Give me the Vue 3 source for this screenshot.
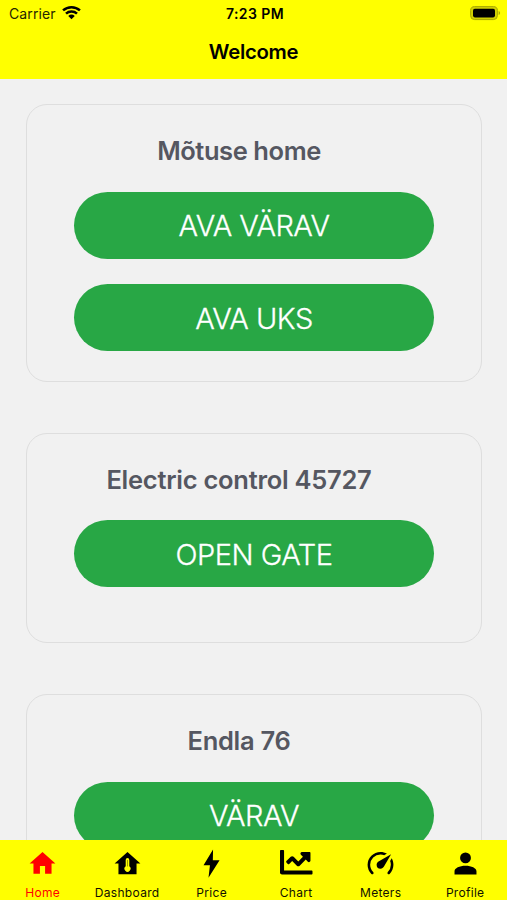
<script setup>
const cards = [
  { title: 'Mõtuse home', buttons: ['AVA VÄRAV', 'AVA UKS'], size: 'tall', tone: 'a' },
  { title: 'Electric control 45727', buttons: ['OPEN GATE'], size: 'short', tone: 'b' },
  { title: 'Endla 76', buttons: ['VÄRAV'], size: 'short', tone: 'c' },
]
const tabs = ['Home', 'Dashboard', 'Price', 'Chart', 'Meters', 'Profile']
</script>

<template>
  <div class="screen">
    <header class="header">
      <div class="status">
        <div class="carrier">
          <span>Carrier</span>
          <svg class="wifi" viewBox="0 0 18 14">
            <path d="M1 5.100C5.500 1 12.500 1 17 5.100" />
            <path d="M3.800 8.200c2.900-2.700 7.500-2.700 10.400 0" />
            <path class="solid" d="M5.900 10.300c1.800-1.600 4.400-1.600 6.200 0L9 13.500z" />
          </svg>
        </div>
        <span class="time">7:23 PM</span>
        <svg class="battery" viewBox="0 0 31 15">
          <rect class="shell" x=".6" y=".6" width="26.8" height="13" rx="4" />
          <rect x="3" y="2.8" width="22" height="8.6" rx="1.8" />
          <path class="nub" d="M28.6 5.100c2 .7 2 3.300 0 4z" />
        </svg>
      </div>
      <h1>Welcome</h1>
    </header>
    <main class="content">
      <section v-for="card in cards" :key="card.title" class="card" :class="card.size">
        <h2 :class="'title-' + card.tone">{{ card.title }}</h2>
        <button v-for="label in card.buttons" :key="label">{{ label }}</button>
      </section>
    </main>
    <nav class="tabs">
      <a v-for="(tab, i) in tabs" :key="tab" class="tab" :class="{ active: i === 0 }">
        <span class="icon">
          <svg v-if="tab === 'Home'" viewBox="0 0 24 24"><path d="M10 20v-6h4v6h5v-8h3L12 3 2 12h3v8z" /></svg>
          <svg v-else-if="tab === 'Dashboard'" viewBox="0 0 24 24">
            <path fill-rule="evenodd" d="M12 3 2 12h3v8.300h14V12h3zM12 7.800a1.400 1.400 0 0 1 1.400 1.400v5a2.300 2.300 0 1 1-2.800 0v-5A1.400 1.400 0 0 1 12 7.800z" />
            <path class="mercury" d="M12 9.300v5" />
          </svg>
          <svg v-else-if="tab === 'Price'" viewBox="0 0 30 30"><path d="M16.500 1.500 7.300 16.800h6.200l-1.400 12L22.800 11.900h-6.500z" /></svg>
          <svg v-else-if="tab === 'Chart'" class="chart" viewBox="0 0 512 512">
            <path d="M496 384H64V80c0-8.840-7.160-16-16-16H16C7.160 64 0 71.160 0 80v336c0 17.670 14.330 32 32 32h464c8.840 0 16-7.160 16-16v-32c0-8.840-7.160-16-16-16zM464 96H345.940c-21.380 0-32.090 25.850-16.970 40.970l32.400 32.400L288 242.750l-73.370-73.370c-12.500-12.500-32.760-12.500-45.250 0l-68.690 68.690c-6.250 6.250-6.250 16.380 0 22.630l22.620 22.620c6.250 6.250 16.380 6.250 22.630 0L192 237.250l73.370 73.370c12.500 12.500 32.760 12.500 45.250 0l96-96 32.400 32.400c15.120 15.120 40.970 4.410 40.970-16.970V112c.010-8.840-7.150-16-15.990-16z" />
          </svg>
          <svg v-else-if="tab === 'Meters'" viewBox="0 0 24 24">
            <path d="M12 16a3 3 0 0 1-3-3c0-1.120.610-2.100 1.500-2.610l9.710-5.620-5.530 9.580c-.5.980-1.510 1.650-2.680 1.650m0-13c1.810 0 3.500.5 4.970 1.320l-2.100 1.210C14 5.190 13 5 12 5a8 8 0 0 0-8 8c0 2.210.890 4.210 2.340 5.650h.010c.390.390.390 1.020 0 1.410s-1.030.390-1.420.010A9.970 9.970 0 0 1 2 13 10 10 0 0 1 12 3m10 10c0 2.760-1.120 5.260-2.930 7.070-.390.380-1.020.380-1.410-.010a.996.996 0 0 1 0-1.410A7.950 7.950 0 0 0 20 13c0-1-.190-2-.540-2.900L20.670 8C21.500 9.500 22 11.180 22 13" />
          </svg>
          <svg v-else viewBox="0 0 24 24"><path d="M12 3.500a4.200 4.200 0 1 1 0 8.400 4.200 4.200 0 0 1 0-8.400M12 13.800c4.700 0 8.500 1.900 8.500 4.200v2.600h-17V18c0-2.300 3.800-4.200 8.500-4.200" /></svg>
        </span>
        <span class="label">{{ tab }}</span>
      </a>
    </nav>
  </div>
</template>

<style>
body { background: #f1f1f1; overflow: hidden; }
</style>

<style scoped>
* { box-sizing: border-box; }
.screen { display: flex; flex-direction: column; width: 507px; height: 900px; overflow: hidden; background: #f1f1f1; font-family: Inter, "Liberation Sans", sans-serif; }
.header { flex: none; height: 79px; background: #ff0; color: #000; }
.status { display: grid; grid-template-columns: 1fr auto 1fr; align-items: center; height: 27px; padding: 0 6px 0 9px; font-size: 14px; }
.carrier { display: flex; align-items: center; gap: 6px; color: #262600; letter-spacing: 0.100px; }
.wifi { width: 19px; height: 14.800px; margin-top: -2px; fill: none; stroke: #000; stroke-width: 2.4; }
.wifi .solid { fill: #000; stroke: none; }
.time { font-weight: 600; font-size: 14px; letter-spacing: 0.4px; }
.battery { width: 31px; height: 15px; justify-self: end; margin-top: -1px; }
.shell { fill: #d0d000; stroke: #a8a800; stroke-width: 1; }
.nub { fill: #a8a800; }
h1 { margin: 0; height: 50px; line-height: 50px; text-align: center; font-size: 20.300px; font-weight: 600; letter-spacing: -0.3px; }
.content { flex: 1; min-height: 0; overflow: hidden; display: flex; flex-direction: column; gap: 51px; padding: 25px 25px 0 26px; }
.card { flex: none; display: flex; flex-direction: column; align-items: center; border: 1px solid #dedede; border-radius: 21px; padding-top: 28px; }
.tall { height: 277.500px; }
.short { height: 210.500px; }
h2 { margin: 0 30px 22.500px 0; height: 36px; line-height: 36px; font-size: 25.500px; font-weight: 600; color: #555761; white-space: nowrap; letter-spacing: -0.3px; }
.title-a { letter-spacing: -0.420px; }
.title-b { letter-spacing: -0.260px; }
button { flex: none; width: 360px; height: 67px; margin: 0 0 25.500px; padding: 1px 0 0; border: 0; border-radius: 34px; background: #28a745; color: #fff; font-family: inherit; font-size: 29px; font-weight: 300; letter-spacing: -0.500px; -webkit-text-stroke: 0.3px #fff; }
.tabs { flex: none; display: grid; grid-template-columns: repeat(6, 1fr); height: 60px; background: #ff0; }
.tab { display: flex; flex-direction: column; align-items: center; padding: 7px 0 0 0.800px; color: #111100; }
.tab.active { color: #f00; }
.icon { display: flex; align-items: center; justify-content: center; height: 32px; padding-left: 0.600px; }
.icon svg { width: 31px; height: 31px; fill: #000; }
.icon .mercury { fill: none; stroke: #6b6b00; stroke-width: 0.5; }
.active .icon svg { fill: #f00; }
.icon .chart { width: 32.500px; height: 32.500px; margin-top: -1px; }
.label { margin-top: 5.500px; line-height: 16px; font-size: 12px; letter-spacing: 0.3px; }
</style>
